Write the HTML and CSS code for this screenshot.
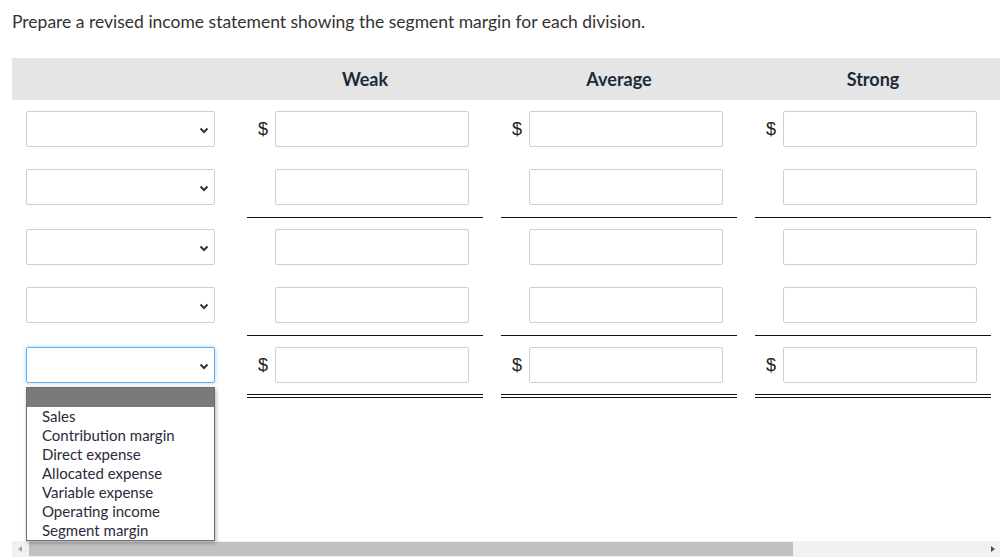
FILE: index.html
```html
<!DOCTYPE html>
<html>
<head>
<meta charset="utf-8">
<link rel="stylesheet" href="styles.css">
</head>
<body>
<div class="page">
  <p class="title">Prepare a revised income statement showing the segment margin for each division.</p>
  <div class="table">
    <div class="head"></div>
    <div class="head">Weak</div>
    <div class="head">Average</div>
    <div class="head">Strong</div>

    <div class="lab"><div class="sel"><svg class="chev" viewBox="0 0 10 7"><path d="M1.5 1.5 L5 5 L8.5 1.5" fill="none" stroke="#333" stroke-width="2"/></svg></div></div>
    <div class="val"><span class="cur">$</span><span class="inp"></span></div>
    <div class="val"><span class="cur">$</span><span class="inp"></span></div>
    <div class="val"><span class="cur">$</span><span class="inp"></span></div>

    <div class="lab"><div class="sel"><svg class="chev" viewBox="0 0 10 7"><path d="M1.5 1.5 L5 5 L8.5 1.5" fill="none" stroke="#333" stroke-width="2"/></svg></div></div>
    <div class="val single"><span class="cur"></span><span class="inp"></span></div>
    <div class="val single"><span class="cur"></span><span class="inp"></span></div>
    <div class="val single"><span class="cur"></span><span class="inp"></span></div>

    <div class="lab"><div class="sel"><svg class="chev" viewBox="0 0 10 7"><path d="M1.5 1.5 L5 5 L8.5 1.5" fill="none" stroke="#333" stroke-width="2"/></svg></div></div>
    <div class="val"><span class="cur"></span><span class="inp"></span></div>
    <div class="val"><span class="cur"></span><span class="inp"></span></div>
    <div class="val"><span class="cur"></span><span class="inp"></span></div>

    <div class="lab"><div class="sel"><svg class="chev" viewBox="0 0 10 7"><path d="M1.5 1.5 L5 5 L8.5 1.5" fill="none" stroke="#333" stroke-width="2"/></svg></div></div>
    <div class="val single"><span class="cur"></span><span class="inp"></span></div>
    <div class="val single"><span class="cur"></span><span class="inp"></span></div>
    <div class="val single"><span class="cur"></span><span class="inp"></span></div>

    <div class="lab">
      <div class="sel focus"><svg class="chev" viewBox="0 0 10 7"><path d="M1.5 1.5 L5 5 L8.5 1.5" fill="none" stroke="#333" stroke-width="2"/></svg></div>
      <div class="menu">
        <div class="menu-blank"></div>
        <div class="opt">Sales</div>
        <div class="opt">Contribution margin</div>
        <div class="opt">Direct expense</div>
        <div class="opt">Allocated expense</div>
        <div class="opt">Variable expense</div>
        <div class="opt">Operating income</div>
        <div class="opt">Segment margin</div>
      </div>
    </div>
    <div class="val double"><span class="cur">$</span><span class="inp"></span></div>
    <div class="val double"><span class="cur">$</span><span class="inp"></span></div>
    <div class="val double"><span class="cur">$</span><span class="inp"></span></div>
  </div>
  <div class="spacer"></div>
  <div class="scrollbar">
    <span class="arrow left"></span>
    <span class="track"><span class="thumb"></span></span>
    <span class="arrow right"></span>
  </div>
</div>
</body>
</html>
```

FILE: styles.css
```css
html, body {
  margin: 0;
  padding: 0;
  background: #fff;
}
body {
  font-family: Lato, "Open Sans", sans-serif;
  color: #2b2b2b;
  width: 1008px;
  height: 557px;
  overflow: hidden;
}
.page {
  padding: 0 8px 0 12px;
  display: flex;
  flex-direction: column;
  height: 557px;
  box-sizing: border-box;
}
.title {
  margin: 0;
  padding-top: 11px;
  height: 58px;
  box-sizing: border-box;
  font-size: 17.5px;
  line-height: 21px;
  color: #333;
}
.table {
  display: grid;
  grid-template-columns: 226px 254px 254px 254px;
}
.head {
  background: #e5e5e5;
  height: 42px;
  line-height: 42px;
  text-align: center;
  font-weight: bold;
  font-size: 18px;
  color: #1c2b39;
}
.lab {
  position: relative;
  padding: 11px 0 11px 14px;
}
.sel {
  width: 189px;
  height: 36px;
  box-sizing: border-box;
  border: 1px solid #cfcfcf;
  border-radius: 2px;
  position: relative;
  background: #fff;
}
.sel.focus {
  border-color: #66afe9;
  box-shadow: 0 0 4px rgba(102, 175, 233, 0.6);
}
.chev {
  position: absolute;
  right: 5px;
  top: 15px;
  width: 10px;
  height: 7px;
}
.val {
  display: flex;
  align-items: center;
  margin: 0 9px;
  padding: 11px 0;
}
.val.single {
  border-bottom: 1px solid #111;
  padding-bottom: 12px;
}
.val.double {
  border-bottom: 4px double #111;
  padding-bottom: 11px;
}
.cur {
  width: 21px;
  margin-right: 7px;
  text-align: right;
  font-family: "Liberation Sans", Arial, sans-serif;
  font-size: 18px;
  color: #222;
}
.inp {
  width: 194px;
  height: 36px;
  box-sizing: border-box;
  border: 1px solid #cfcfcf;
  border-radius: 2px;
  background: #fff;
}
.menu {
  position: absolute;
  left: 14px;
  top: 51px;
  width: 189px;
  box-sizing: border-box;
  border: 1px solid #6e6e6e;
  background: #fff;
  box-shadow: 1px 2px 4px rgba(0, 0, 0, 0.3);
  z-index: 2;
}
.menu-blank {
  height: 19px;
  background: #7a7a7a;
}
.opt {
  font-size: 15px;
  line-height: 19px;
  padding-left: 15px;
  color: #2b2b3a;
  white-space: nowrap;
}
.spacer {
  flex: 1;
}
.scrollbar {
  height: 16px;
  background: #f1f1f1;
  display: flex;
  align-items: center;
  position: relative;
  z-index: 1;
}
.arrow {
  width: 17px;
  height: 16px;
  position: relative;
}
.arrow.left::after {
  content: "";
  position: absolute;
  left: 6px;
  top: 5px;
  border-top: 3px solid transparent;
  border-bottom: 3px solid transparent;
  border-right: 4px solid #a3a3a3;
}
.arrow.right::after {
  content: "";
  position: absolute;
  right: 5px;
  top: 5px;
  border-top: 3px solid transparent;
  border-bottom: 3px solid transparent;
  border-left: 4px solid #505050;
}
.track {
  flex: 1;
  height: 14px;
  position: relative;
}
.thumb {
  position: absolute;
  left: 0;
  top: 0;
  width: 764px;
  height: 14px;
  background: #c1c1c1;
}
```
